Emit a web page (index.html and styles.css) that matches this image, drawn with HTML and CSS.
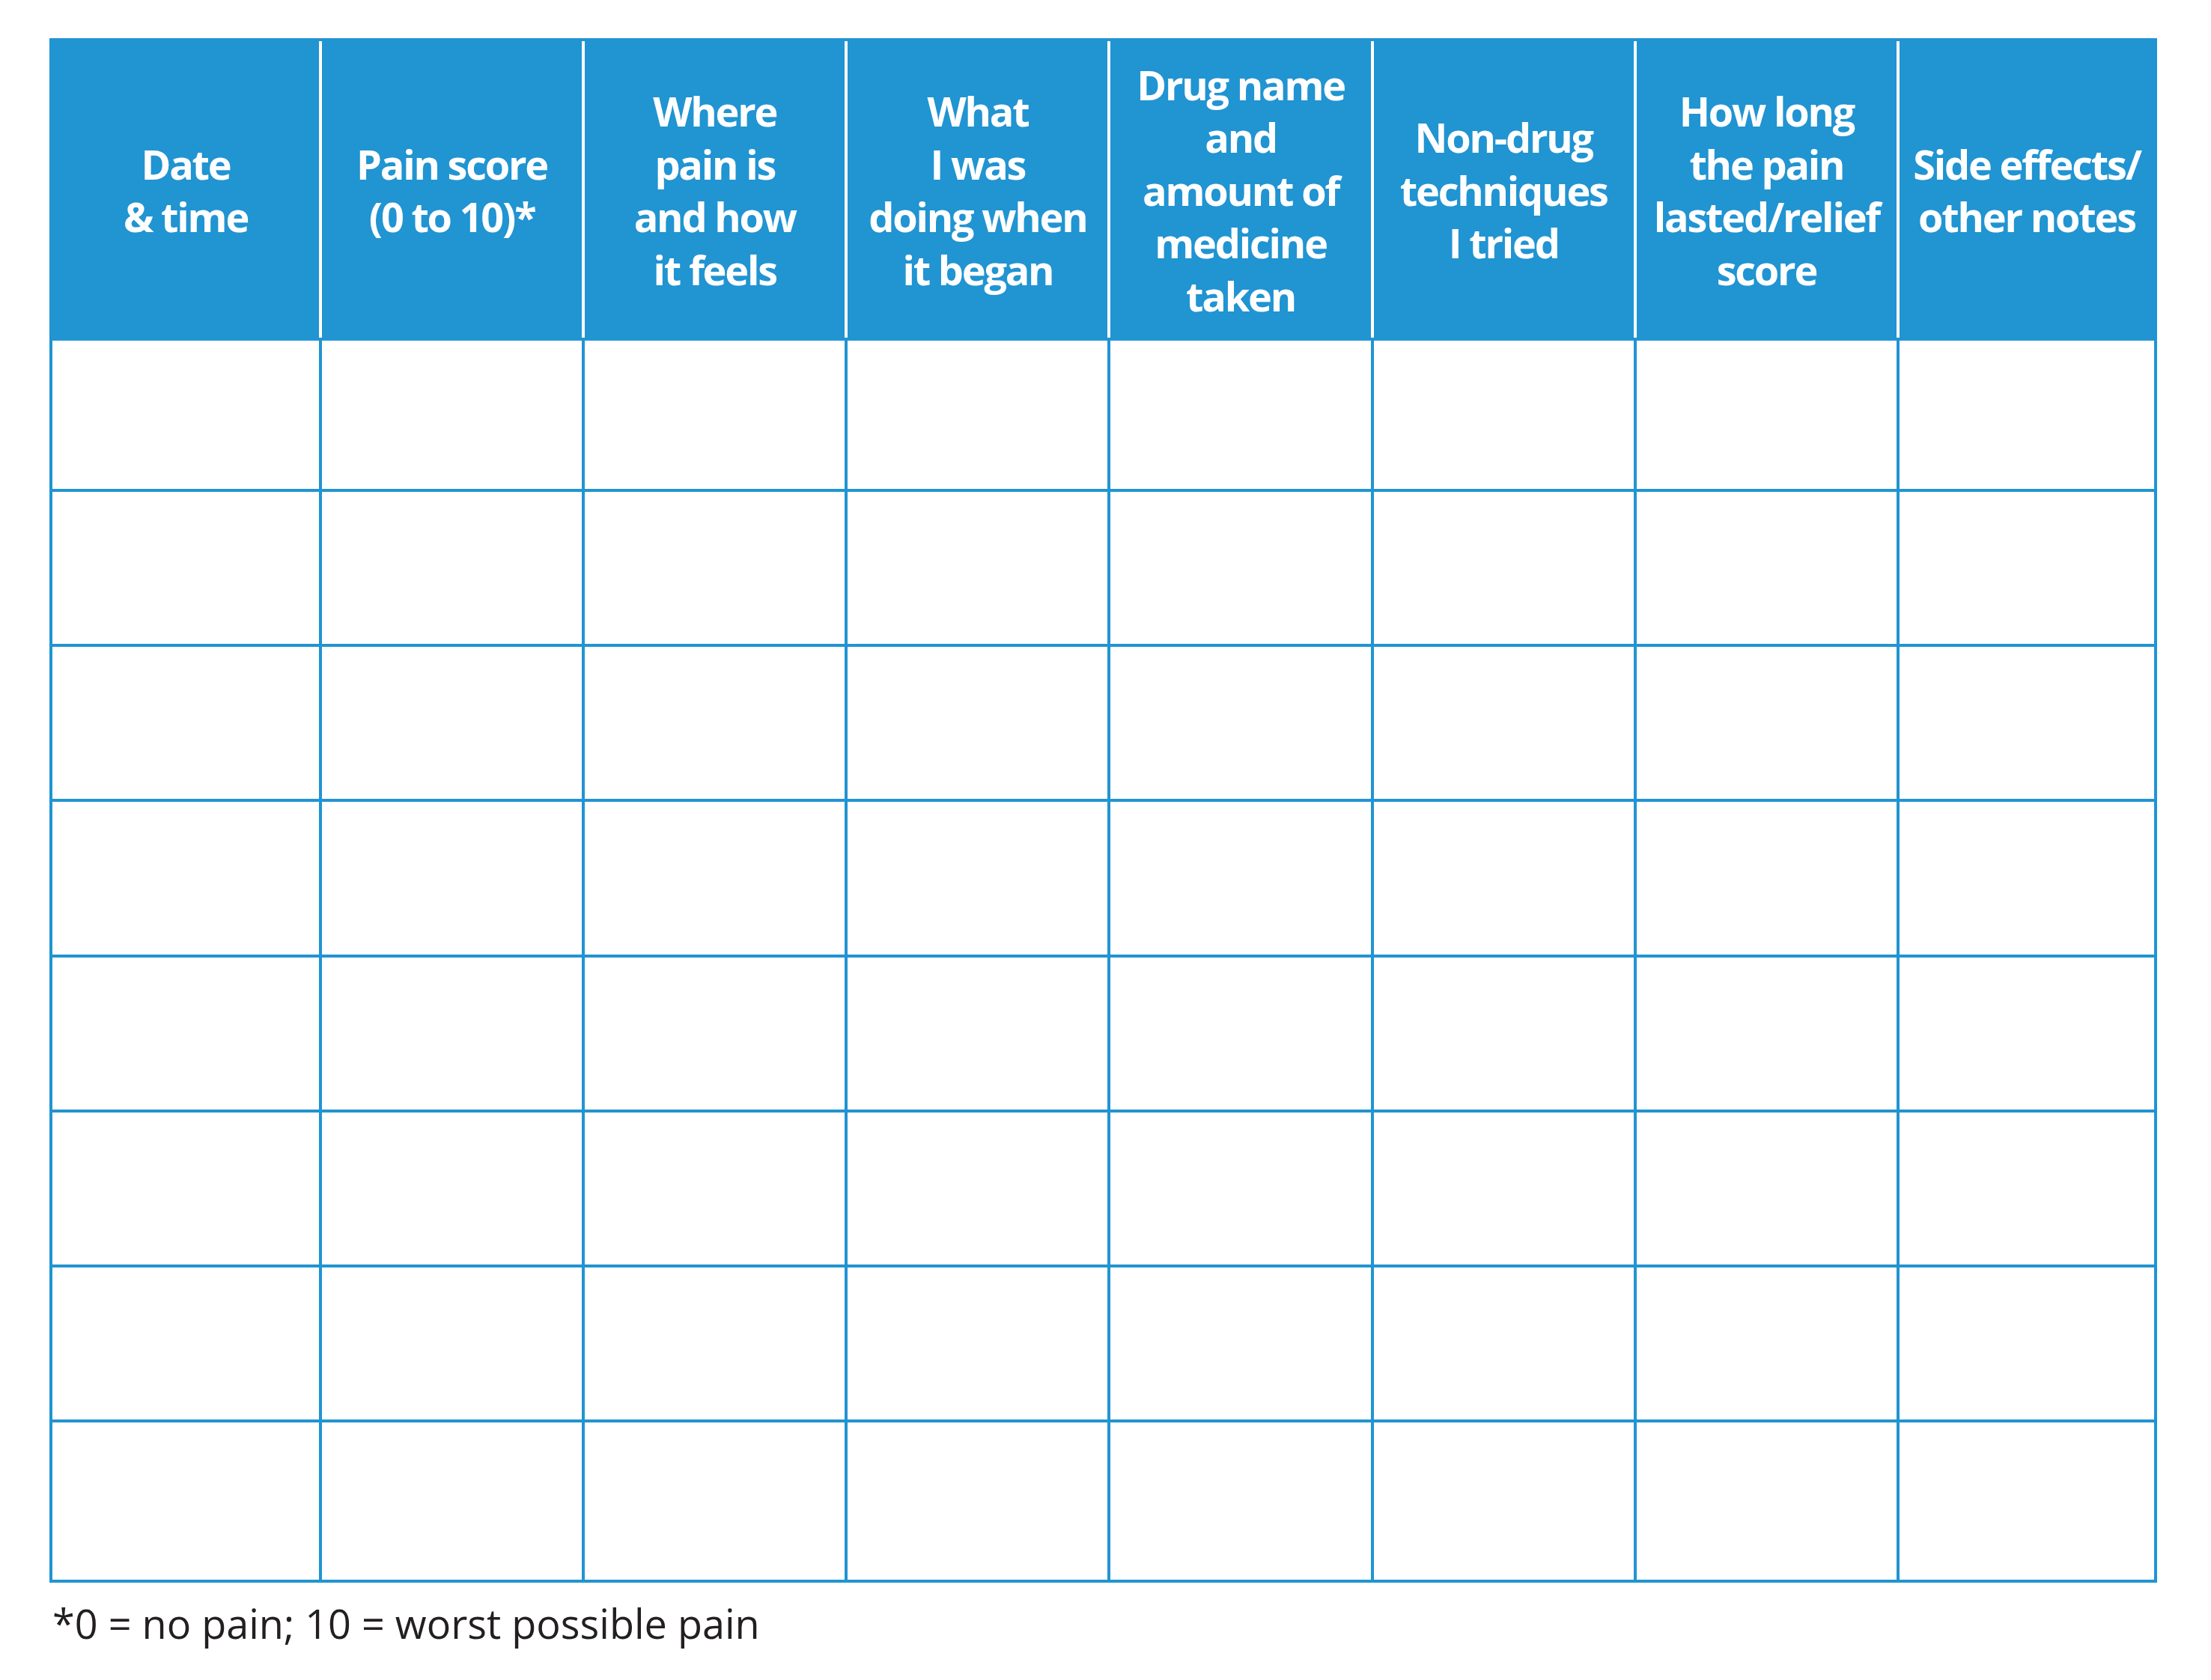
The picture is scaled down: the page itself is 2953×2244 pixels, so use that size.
FILE: index.html
```html
<!DOCTYPE html>
<html lang="en">
<head>
<meta charset="utf-8">
<title>Pain diary</title>
<link rel="stylesheet" href="styles.css">
</head>
<body>
<div class="chart">
  <div class="chart-head">
    <div class="hcell">Date<br>&amp; time</div>
    <div class="hcell">Pain score<br>(0 to 10)*</div>
    <div class="hcell">Where<br>pain is<br>and how<br>it feels</div>
    <div class="hcell">What<br>I was<br>doing when<br>it began</div>
    <div class="hcell">Drug name<br>and<br>amount of<br>medicine<br>taken</div>
    <div class="hcell">Non-drug<br>techniques<br>I tried</div>
    <div class="hcell">How long<br>the pain<br>lasted/relief<br>score</div>
    <div class="hcell">Side effects/<br>other notes</div>
  </div>
  <div class="chart-body">
    <div class="cell"></div><div class="cell"></div><div class="cell"></div><div class="cell"></div><div class="cell"></div><div class="cell"></div><div class="cell"></div><div class="cell"></div>
    <div class="cell"></div><div class="cell"></div><div class="cell"></div><div class="cell"></div><div class="cell"></div><div class="cell"></div><div class="cell"></div><div class="cell"></div>
    <div class="cell"></div><div class="cell"></div><div class="cell"></div><div class="cell"></div><div class="cell"></div><div class="cell"></div><div class="cell"></div><div class="cell"></div>
    <div class="cell"></div><div class="cell"></div><div class="cell"></div><div class="cell"></div><div class="cell"></div><div class="cell"></div><div class="cell"></div><div class="cell"></div>
    <div class="cell"></div><div class="cell"></div><div class="cell"></div><div class="cell"></div><div class="cell"></div><div class="cell"></div><div class="cell"></div><div class="cell"></div>
    <div class="cell"></div><div class="cell"></div><div class="cell"></div><div class="cell"></div><div class="cell"></div><div class="cell"></div><div class="cell"></div><div class="cell"></div>
    <div class="cell"></div><div class="cell"></div><div class="cell"></div><div class="cell"></div><div class="cell"></div><div class="cell"></div><div class="cell"></div><div class="cell"></div>
    <div class="cell"></div><div class="cell"></div><div class="cell"></div><div class="cell"></div><div class="cell"></div><div class="cell"></div><div class="cell"></div><div class="cell"></div>
  </div>
</div>
<p class="footnote">*0 = no pain; 10 = worst possible pain</p>
</body>
</html>
```

FILE: styles.css
```css
html, body {
  margin: 0;
  background: #ffffff;
}

body {
  padding: 51px 0 0 66px;
  font-family: "Open Sans", "Noto Sans", "Liberation Sans", sans-serif;
}

.chart {
  box-sizing: border-box;
  width: 2815px;
  border: 4px solid #2194d2;
}

.chart-head,
.chart-body {
  display: grid;
  grid-template-columns: 356px repeat(6, 1fr) 340px;
  column-gap: 4px;
}

.chart-head {
  height: 396px;
  background: #ffffff;
  border-bottom: 4px solid #2194d2;
}

.hcell {
  background: #2194d2;
  color: #ffffff;
  font-weight: 700;
  font-size: 54px;
  line-height: 70.5px;
  letter-spacing: -2.2px;
  text-align: center;
  display: flex;
  align-items: center;
  justify-content: center;
  padding-top: 2px;
}

.chart-body {
  background: #2194d2;
  row-gap: 4px;
  grid-template-rows: 198px repeat(6, 203.2px) 210px;
}

.cell {
  background: #ffffff;
}

.footnote {
  margin: 18px 0 0 4px;
  font-size: 54px;
  line-height: 72px;
  color: #231f20;
}
```
